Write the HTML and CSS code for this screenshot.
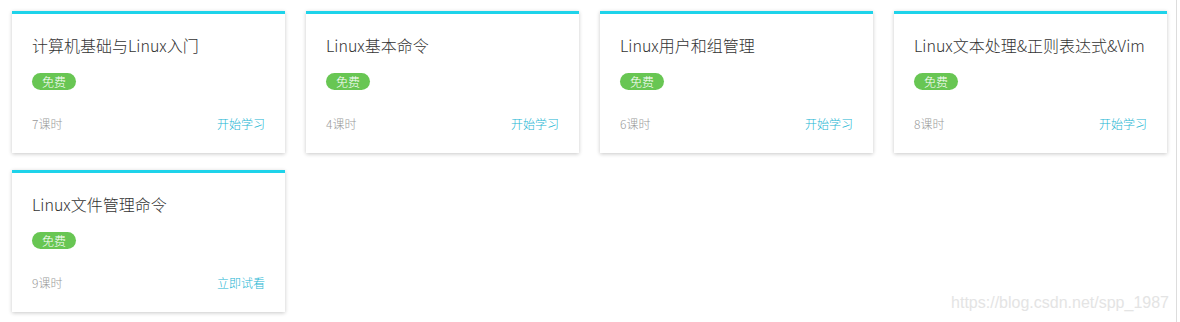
FILE: index.html
```html
<!DOCTYPE html>
<html lang="zh-CN">
<head>
    <meta charset="UTF-8">
    <title>课程列表</title>
    <link rel="stylesheet" href="styles.css">
</head>
<body>
    <div class="page">
        <div class="course-list">
            <div class="course-card">
                <h3 class="course-title">计算机基础与Linux入门</h3>
                <span class="badge">免费</span>
                <div class="course-foot">
                    <span class="lessons">7课时</span>
                    <a class="action" href="#">开始学习</a>
                </div>
            </div>

            <div class="course-card">
                <h3 class="course-title">Linux基本命令</h3>
                <span class="badge">免费</span>
                <div class="course-foot">
                    <span class="lessons">4课时</span>
                    <a class="action" href="#">开始学习</a>
                </div>
            </div>

            <div class="course-card">
                <h3 class="course-title">Linux用户和组管理</h3>
                <span class="badge">免费</span>
                <div class="course-foot">
                    <span class="lessons">6课时</span>
                    <a class="action" href="#">开始学习</a>
                </div>
            </div>

            <div class="course-card">
                <h3 class="course-title">Linux文本处理&amp;正则表达式&amp;Vim</h3>
                <span class="badge">免费</span>
                <div class="course-foot">
                    <span class="lessons">8课时</span>
                    <a class="action" href="#">开始学习</a>
                </div>
            </div>

            <div class="course-card">
                <h3 class="course-title">Linux文件管理命令</h3>
                <span class="badge">免费</span>
                <div class="course-foot">
                    <span class="lessons">9课时</span>
                    <a class="action" href="#">立即试看</a>
                </div>
            </div>
        </div>

        <!-- blog watermark -->
        <div class="watermark">https://blog.csdn.net/spp_1987</div>
    </div>
</body>
</html>
```

FILE: styles.css
```css
body {
    margin: 0;
    background-color: #ffffff;
    font-family: "Noto Sans CJK SC", "Noto Sans", sans-serif;
    font-weight: 300;
    color: #333333;
}

.page {
    position: relative;
    width: 1177px;
    height: 322px;
    border-right: 1px solid #dddddd;
    box-sizing: border-box;
}

.course-list {
    display: grid;
    grid-template-columns: repeat(4, 273px);
    column-gap: 21px;
    row-gap: 17px;
    padding: 11px 0 0 12px;
}

.course-card {
    display: flex;
    flex-direction: column;
    align-items: flex-start;
    background-color: #ffffff;
    border-top: 3px solid #1ed3ea;
    padding: 20px 20px 20px 20px;
    box-shadow: 0 1px 4px rgba(0, 0, 0, 0.22);
}

.course-title {
    margin: 0;
    font-size: 16px;
    font-weight: 300;
    line-height: 22px;
    color: #333333;
    white-space: nowrap;
}

.badge {
    margin-top: 17px;
    height: 17px;
    padding: 0 10px;
    border-radius: 9px;
    background-color: #68c653;
    color: #ffffff;
    font-size: 12px;
    line-height: 17px;
}

.course-foot {
    display: flex;
    justify-content: space-between;
    align-self: stretch;
    margin-top: 25px;
    font-size: 12px;
    line-height: 18px;
}

.lessons {
    color: #999999;
}

.action {
    color: #23b5d3;
    text-decoration: none;
}

.watermark {
    position: absolute;
    right: 7px;
    bottom: 10px;
    font-family: "Liberation Sans", Arial, sans-serif;
    font-size: 16px;
    font-weight: normal;
    color: #e4e4e4;
}
```
